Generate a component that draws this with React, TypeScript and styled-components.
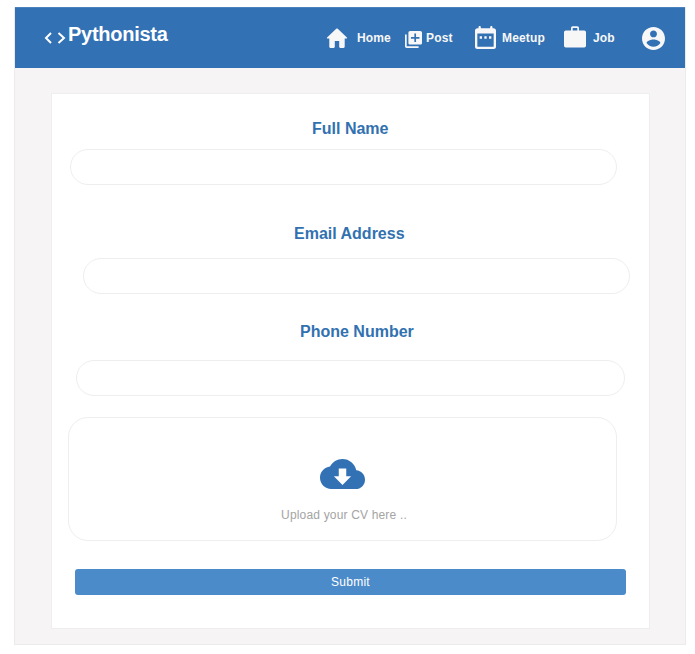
import React from "react";
import styled, { createGlobalStyle } from "styled-components";

const GlobalStyle = createGlobalStyle`
  * { box-sizing: border-box; }
  body {
    margin: 0;
    background: #ffffff;
    font-family: "Liberation Sans", Arial, sans-serif;
  }
`;

const Page = styled.div`
  width: 695px;
  height: 654px;
  padding: 7px 9px 9px 14px;
  overflow: hidden;
`;

const Frame = styled.div`
  width: 672px;
  height: 638px;
  background: #f6f4f5;
  border: solid #ebebec;
  border-width: 0 1px 1px 1px;
`;

const Header = styled.header`
  display: flex;
  align-items: flex-start;
  height: 61px;
  background: #3271b4;
  border-top: 1px solid #4a82bd;
`;

const Brand = styled.div`
  display: flex;
  align-items: flex-start;
  width: 311px;
  padding: 15px 0 0 29px;
  color: #ffffff;
`;

const BrandMark = styled.svg`
  width: 23px;
  height: 14px;
  margin-top: 8px;
`;

const BrandName = styled.span`
  margin-left: 1px;
  font-size: 20px;
  line-height: 23px;
  font-weight: 700;
  letter-spacing: -0.26px;
`;

const Nav = styled.nav`
  display: flex;
  align-items: flex-start;
  padding-top: 18px;
`;

const NavItem = styled.a<{ $width: number }>`
  display: flex;
  align-items: flex-start;
  width: ${(p) => p.$width}px;
  color: #f7f7f7;
`;

const NavIcon = styled.svg<{ $w: number; $h: number; $top: number }>`
  flex: none;
  width: ${(p) => p.$w}px;
  height: ${(p) => p.$h}px;
  margin-top: ${(p) => p.$top}px;
  fill: currentColor;
`;

const NavLabel = styled.span<{ $gap: number }>`
  margin: 5px 0 0 ${(p) => p.$gap}px;
  font-size: 12px;
  line-height: 14px;
  font-weight: 700;
  letter-spacing: 0.15px;
  white-space: nowrap;
`;

const Card = styled.form`
  display: flex;
  flex-direction: column;
  width: 599px;
  height: 536px;
  margin: 25px 0 0 36px;
  background: #ffffff;
  border: 1px solid #efeeef;
`;

const Label = styled.label<{ $top: number; $left: number }>`
  margin: ${(p) => p.$top}px 0 0 ${(p) => p.$left}px;
  height: 18px;
  color: #3271b0;
  font-size: 16px;
  line-height: 18px;
  font-weight: 700;
`;

const Input = styled.input<{ $top: number; $left: number; $width?: number }>`
  flex: none;
  width: ${(p) => p.$width ?? 547}px;
  height: 36px;
  margin: ${(p) => p.$top}px 0 0 ${(p) => p.$left}px;
  padding: 0 16px;
  background: #ffffff;
  border: 1px solid #eeeeee;
  border-radius: 18px;
  outline: none;
`;

const Upload = styled.div`
  display: flex;
  flex: none;
  flex-direction: column;
  align-items: center;
  width: 549px;
  height: 124px;
  margin: 21px 0 0 16px;
  padding-top: 41px;
  border: 1px solid #eeeeee;
  border-radius: 20px;
`;

const Cloud = styled.svg`
  width: 45px;
  height: 30px;
  fill: #3271b4;
`;

const UploadText = styled.span`
  margin-top: 19px;
  padding-left: 3px;
  color: #a4a4a4;
  font-size: 12px;
  line-height: 14px;
  letter-spacing: 0.17px;
`;

const Submit = styled.button`
  flex: none;
  width: 551px;
  height: 26px;
  margin: 28px 0 0 23px;
  padding: 0;
  border: 0;
  border-radius: 3px;
  background: #4b8bca;
  color: #ffffff;
  font-family: inherit;
  font-size: 12px;
  line-height: 14px;
  letter-spacing: 0.25px;
`;

export default function App() {
  return (
    <>
      <GlobalStyle />
      <Page>
        <Frame>
          <Header>
            <Brand>
              <BrandMark viewBox="0 0 23 14" fill="none" stroke="currentColor" strokeWidth="2">
                <path d="M7 2 2 7l5 5M14.500 2 20 7l-5.500 5" />
              </BrandMark>
              <BrandName>Pythonista</BrandName>
            </Brand>
            <Nav>
              <NavItem $width={79}>
                <NavIcon viewBox="2 3 20 17" preserveAspectRatio="none" $w={22} $h={20} $top={2}>
                  <path d="M10 19v-5h4v5c0 .55.45 1 1 1h3c.55 0 1-.45 1-1v-7h1.7c.46 0 .68-.57.33-.87L12.67 3.6c-.38-.34-.96-.34-1.34 0l-8.36 7.53c-.34.3-.13.87.33.87H5v7c0 .55.45 1 1 1h3c.55 0 1-.45 1-1z" />
                </NavIcon>
                <NavLabel $gap={9}>Home</NavLabel>
              </NavItem>
              <NavItem $width={70}>
                <NavIcon viewBox="2 2 20 20" $w={17} $h={17} $top={5}>
                  <path d="M4 6H2v14c0 1.1.9 2 2 2h14v-2H4V6zm16-4H8c-1.1 0-2 .9-2 2v12c0 1.1.9 2 2 2h12c1.1 0 2-.9 2-2V4c0-1.1-.9-2-2-2zm-1 9h-4v4h-2v-4H9V9h4V5h2v4h4v2z" />
                </NavIcon>
                <NavLabel $gap={4}>Post</NavLabel>
              </NavItem>
              <NavItem $width={89}>
                <NavIcon viewBox="3 2 18 20" preserveAspectRatio="none" $w={21} $h={23} $top={0}>
                  <path d="M9 11H7v2h2v-2zm4 0h-2v2h2v-2zm4 0h-2v2h2v-2zm2-7h-1V3c0-.55-.45-1-1-1s-1 .45-1 1v1H8V3c0-.55-.45-1-1-1s-1 .45-1 1v1H5c-1.11 0-1.99.9-1.99 2L3 20c0 1.1.89 2 2 2h14c1.1 0 2-.9 2-2V6c0-1.1-.9-2-2-2zm-.5 16h-13c-.3 0-.5-.2-.5-.5V8.500h14v11c0 .3-.2.5-.5.5z" />
                </NavIcon>
                <NavLabel $gap={6}>Meetup</NavLabel>
              </NavItem>
              <NavItem $width={78}>
                <NavIcon viewBox="0 0 22 22" $w={22} $h={22} $top={0}>
                  <path d="M7 4.500V2Q7 .3 8.700 .3h4.600Q15 .3 15 2v2.500h5.200Q22 4.500 22 6.300v13.400q0 1.800-1.800 1.800H1.800Q0 21.500 0 19.700V6.300Q0 4.500 1.800 4.500zm1.700 0h4.600V2H8.700z" />
                </NavIcon>
                <NavLabel $gap={7}>Job</NavLabel>
              </NavItem>
              <NavItem $width={24} aria-label="Account">
                <NavIcon viewBox="2 2 20 20" $w={23} $h={23} $top={1}>
                  <path d="M12 2C6.480 2 2 6.480 2 12s4.480 10 10 10 10-4.480 10-10S17.520 2 12 2zm0 3c1.660 0 3 1.340 3 3s-1.340 3-3 3-3-1.340-3-3 1.340-3 3-3zm0 14.200c-2.500 0-4.710-1.280-6-3.220.03-1.990 4-3.080 6-3.080 1.990 0 5.970 1.090 6 3.080-1.290 1.940-3.500 3.220-6 3.220z" />
                </NavIcon>
              </NavItem>
            </Nav>
          </Header>
          <Card onSubmit={(e) => e.preventDefault()}>
            <Label htmlFor="name" $top={26} $left={260}>Full Name</Label>
            <Input id="name" $top={11} $left={18} />
            <Label htmlFor="email" $top={40} $left={242}>Email Address</Label>
            <Input id="email" $top={15} $left={31} />
            <Label htmlFor="phone" $top={29} $left={248}>Phone Number</Label>
            <Input id="phone" $top={19} $left={24} $width={549} />
            <Upload>
              <Cloud viewBox="0 4 24 16">
                <path d="M19.350 10.040C18.670 6.590 15.640 4 12 4 9.110 4 6.600 5.640 5.350 8.040 2.340 8.360 0 10.910 0 14c0 3.310 2.690 6 6 6h13c2.760 0 5-2.240 5-5 0-2.640-2.050-4.780-4.650-4.960zM16.600 13.200 12 17.800 7.400 13.200H10V9h4v4.200h2.600z" />
              </Cloud>
              <UploadText>Upload your CV here ..</UploadText>
            </Upload>
            <Submit type="submit">Submit</Submit>
          </Card>
        </Frame>
      </Page>
    </>
  );
}
